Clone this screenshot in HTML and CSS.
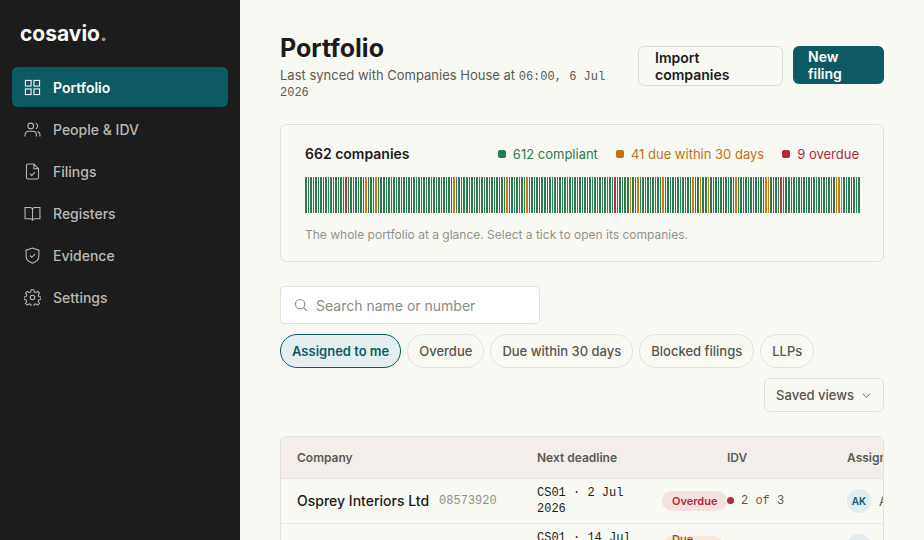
FILE: index.html
```html
<!doctype html>
<html lang="en">
<head>
  <meta charset="utf-8">
  <meta name="viewport" content="width=device-width, initial-scale=1">
  <title>Portfolio - Cosavio</title>
  <link rel="stylesheet" href="styles.css">
</head>
<body>
  <aside class="sidebar">
    <a class="logo" href="#">cosavio<span>.</span></a>
    <nav class="nav">
      <a class="active" href="#">
        <svg viewBox="0 0 24 24"><rect x="2" y="2" width="8" height="8"/><rect x="14" y="2" width="8" height="8"/><rect x="2" y="14" width="8" height="8"/><rect x="14" y="14" width="8" height="8"/></svg>
        Portfolio
      </a>
      <a href="#">
        <svg viewBox="0 0 24 24"><circle cx="9.5" cy="7" r="4"/><path d="M1.500 22v-2.500a5 5 0 0 1 5-5h6a5 5 0 0 1 5 5V22M16.500 3.200a4 4 0 0 1 0 7.600M22.500 22v-2.500a5 5 0 0 0-3.500-4.800"/></svg>
        People &amp; IDV
      </a>
      <a href="#">
        <svg viewBox="0 0 24 24"><path d="M14 1.500H5.500a2 2 0 0 0-2 2v17a2 2 0 0 0 2 2h13a2 2 0 0 0 2-2V8zM14 1.500V8h6.500M8.500 15l2.500 2.500 4.500-4.500"/></svg>
        Filings
      </a>
      <a href="#">
        <svg viewBox="0 0 24 24"><path d="M12 6.500a3 3 0 0 0-3-3H1.500v16H9a3 3 0 0 1 3 2.500 3 3 0 0 1 3-2.500h7.500v-16H15a3 3 0 0 0-3 3zM12 6.500V22"/></svg>
        Registers
      </a>
      <a href="#">
        <svg viewBox="0 0 24 24"><path d="M12 23c5-2 9-4.500 9-10V4.500L12 1.500 3 4.500V13c0 5.500 4 8 9 10zM8.500 12l2.500 2.500 4.500-4.500"/></svg>
        Evidence
      </a>
      <a href="#">
        <svg viewBox="0 0 24 24"><circle cx="12" cy="12" r="3.200"/><path d="M10.200 1h3.600l.7 3.200 2 .9 2.900-1.800 2.500 2.500-1.800 2.900.9 2 3 .7v3.200l-3 .7-.9 2 1.800 2.900-2.500 2.500-2.900-1.800-2 .9-.7 3.100h-3.600l-.7-3.100-2-.9-2.900 1.800-2.500-2.500 1.800-2.900-.9-2-3-.7v-3.200l3-.7.9-2-1.800-2.900 2.500-2.500 2.900 1.800 2-.9z"/></svg>
        Settings
      </a>
    </nav>
  </aside>

  <main class="main">
    <header class="page-header">
      <div class="page-title">
        <h1>Portfolio</h1>
        <p>Last synced with Companies House at <time class="mono">06:00, 6 Jul 2026</time></p>
      </div>
      <div class="actions">
        <button class="btn btn-import">Import companies</button>
        <button class="btn btn-primary">New filing</button>
      </div>
    </header>

    <section class="overview">
      <div class="overview-head">
        <h2>662 companies</h2>
        <ul class="legend">
          <li class="compliant">612 compliant</li>
          <li class="due">41 due within 30 days</li>
          <li class="overdue">9 overdue</li>
        </ul>
      </div>
      <div class="ticks" id="ticks"></div>
      <p class="caption">The whole portfolio at a glance. Select a tick to open its companies.</p>
    </section>

    <div class="toolbar">
      <label class="search">
        <svg viewBox="0 0 24 24"><circle cx="10.500" cy="10.500" r="8"/><path d="M16.500 16.500L22 22"/></svg>
        <input type="search" placeholder="Search name or number" aria-label="Search name or number">
      </label>
      <div class="chips">
        <button class="chip selected">Assigned to me</button>
        <button class="chip">Overdue</button>
        <button class="chip">Due within 30 days</button>
        <button class="chip">Blocked filings</button>
        <button class="chip">LLPs</button>
      </div>
      <button class="views">Saved views <svg viewBox="0 0 24 24"><path d="M4 8l8 8 8-8"/></svg></button>
    </div>

    <div class="table-wrap">
      <table>
        <colgroup>
          <col class="col-company">
          <col class="col-deadline">
          <col class="col-idv">
          <col class="col-assigned">
        </colgroup>
        <thead>
          <tr><th>Company</th><th>Next deadline</th><th>IDV</th><th>Assigned</th></tr>
        </thead>
        <tbody>
          <tr>
            <td><div class="company"><a href="#">Osprey Interiors Ltd</a><span class="number">08573920</span></div></td>
            <td><div class="deadline"><span class="mono">CS01 · 2 Jul 2026</span><span class="pill pill-overdue">Overdue</span></div></td>
            <td><div class="idv mono">2 of 3</div></td>
            <td><div class="assignee"><span class="avatar">AK</span>A. Khan</div></td>
          </tr>
          <tr>
            <td><div class="company"><a href="#">Marlow Foods Ltd</a><span class="number">10482736</span></div></td>
            <td><div class="deadline"><span class="mono">CS01 · 14 Jul 2026</span><span class="pill pill-due">Due soon</span></div></td>
            <td><div class="idv mono">3 of 3</div></td>
            <td><div class="assignee"><span class="avatar">AK</span>A. Khan</div></td>
          </tr>
        </tbody>
      </table>
    </div>
  </main>
  <script src="script.js"></script>
</body>
</html>
```

FILE: styles.css
```css
* {
  box-sizing: border-box;
}

body {
  margin: 0;
  display: flex;
  min-height: 100vh;
  background: #f9f9f3;
  color: #1b1b1b;
  font-family: Inter, "Liberation Sans", sans-serif;
  font-size: 14px;
}

h1, h2, p, ul {
  margin: 0;
  padding: 0;
}

a {
  color: inherit;
  text-decoration: none;
}

button, input {
  font: inherit;
  color: inherit;
}

button {
  cursor: pointer;
}

svg {
  flex: none;
  fill: none;
  stroke: currentColor;
  stroke-width: 2;
}

.mono, .number {
  font-family: "Liberation Mono", monospace;
}

/* Sidebar */
.sidebar {
  position: sticky;
  top: 0;
  flex: none;
  width: 240px;
  height: 100vh;
  padding: 20px 12px;
  background: #1c1c1c;
}

.logo {
  display: block;
  padding: 0 8px;
  margin-bottom: 19px;
  color: #fafaf5;
  font-size: 21px;
  font-weight: 700;
  line-height: 28px;
}

.logo span {
  color: #999;
}

.nav {
  display: flex;
  flex-direction: column;
  gap: 2px;
}

.nav a {
  display: flex;
  align-items: center;
  gap: 12px;
  height: 40px;
  padding: 0 12px;
  border-radius: 6px;
  color: #b9b9b6;
  font-weight: 500;
}

.nav svg {
  width: 17px;
  height: 17px;
  stroke-width: 1.500;
}

.nav .active {
  background: #0d5a62;
  color: #fff;
  font-weight: 600;
}

/* Page header */
.main {
  flex: 1;
  min-width: 0;
  padding: 32px 40px;
}

.page-header {
  display: flex;
  align-items: center;
  justify-content: space-between;
  gap: 24px;
  min-height: 68px;
  margin-bottom: 24px;
}

.page-title h1 {
  margin-bottom: 4px;
  font-size: 25px;
  font-weight: 700;
  line-height: 30px;
}

.page-title p {
  color: #5a5a56;
  font-size: 13px;
  line-height: 16px;
}

.page-title .mono {
  font-size: 12px;
  line-height: 12px;
}

.actions {
  display: flex;
  align-items: flex-start;
  flex: none;
  gap: 10px;
}

.btn {
  padding: 2px 16px;
  border: 1px solid #dcdcd6;
  border-radius: 6px;
  background: transparent;
  font-weight: 600;
  line-height: 17px;
  text-align: left;
}

.btn-import {
  width: 145px;
}

.btn-primary {
  width: 91px;
  padding: 2px 15px;
  border: 0;
  background: #0d5a62;
  color: #fff;
}

/* Portfolio overview */
.overview {
  padding: 19px 24px 18px;
  margin-bottom: 24px;
  border: 1px solid #e2e1da;
  border-radius: 6px;
}

.overview-head {
  display: flex;
  align-items: center;
  justify-content: space-between;
  margin-bottom: 13px;
  line-height: 20px;
}

.overview-head h2 {
  font-size: 14px;
  font-weight: 600;
}

.legend {
  display: flex;
  gap: 18px;
  list-style: none;
  font-size: 13px;
}

.legend li {
  display: flex;
  align-items: center;
  gap: 7px;
}

.legend li::before {
  content: "";
  width: 8px;
  height: 8px;
  border-radius: 2px;
  background: currentColor;
}

.compliant { color: #2b7a4f; }
.due { color: #c0720f; }
.overdue { color: #b02a37; }

.ticks {
  display: flex;
  gap: 1px;
  height: 36px;
  margin-bottom: 14px;
}

.tick {
  flex: 1;
  min-width: 0;
  padding: 0;
  border: 0;
  background: #2b7a4f;
}

.tick-due { background: #c97a16; }
.tick-overdue { background: #b8323c; }

.caption {
  color: #92928c;
  font-size: 12px;
  line-height: 16px;
}

/* Search and filters */
.toolbar {
  display: flex;
  flex-wrap: wrap;
  gap: 10px;
  margin-bottom: 24px;
}

.search {
  display: flex;
  align-items: center;
  gap: 8px;
  width: 260px;
  height: 38px;
  padding: 0 13px;
  border: 1px solid #e2e1da;
  border-radius: 5px;
  background: #fff;
  color: #8b8b87;
}

.search svg {
  width: 14px;
  height: 14px;
}

.search input {
  flex: 1;
  min-width: 0;
  padding: 0;
  border: 0;
  outline: 0;
  background: none;
}

.search input::placeholder {
  color: #8b8b87;
}

.chips {
  display: flex;
  flex-wrap: wrap;
  gap: 6px;
}

.chip, .views {
  height: 34px;
  padding: 0 11px;
  border: 1px solid #e2e1da;
  border-radius: 17px;
  background: transparent;
  color: #55554f;
  font-size: 13px;
  font-weight: 500;
}

.chip.selected {
  border-color: #0d5a62;
  background: #e6eff0;
  color: #0d5a62;
  font-weight: 600;
}

.views {
  display: flex;
  align-items: center;
  gap: 7px;
  margin-left: auto;
  border-radius: 5px;
}

.views svg {
  width: 11px;
  height: 11px;
}

/* Company table */
.table-wrap {
  overflow: hidden;
  border: 1px solid #e2e1da;
  border-radius: 6px;
}

table {
  width: 760px;
  table-layout: fixed;
  border-collapse: collapse;
}

.col-company { width: 240px; }
.col-deadline { width: 190px; }
.col-idv { width: 120px; }

th {
  height: 41px;
  padding: 0 16px;
  border-bottom: 1px solid #e2e1da;
  background: #f3eee9;
  color: #5a5a56;
  font-size: 12px;
  font-weight: 600;
  text-align: left;
}

td {
  height: 45px;
  padding: 0 16px;
  border-bottom: 1px solid #e8e8e1;
  white-space: nowrap;
}

.company {
  display: flex;
  align-items: center;
  gap: 10px;
}

.company a {
  font-weight: 500;
}

.number {
  color: #92928c;
  font-size: 12px;
}

.deadline {
  display: flex;
  align-items: center;
  gap: 20px;
}

.deadline .mono {
  flex: none;
  width: 105px;
  font-size: 12px;
  line-height: 16px;
  white-space: normal;
}

.pill {
  display: flex;
  align-items: center;
  flex: none;
  height: 20px;
  padding: 0 10px;
  border-radius: 10px;
  font-size: 11px;
  font-weight: 600;
  line-height: 14px;
}

.pill-overdue {
  background: #f5e1de;
  color: #b02a37;
}

.pill-due {
  width: 62px;
  background: #f7e8d8;
  color: #a8560c;
  white-space: normal;
}

.idv {
  display: flex;
  align-items: center;
  gap: 7px;
  color: #5a5a56;
  font-size: 12px;
}

.idv::before {
  content: "";
  width: 7px;
  height: 7px;
  border-radius: 50%;
  background: #b02a37;
}

.assignee {
  display: flex;
  align-items: center;
  gap: 8px;
  color: #5a5a56;
  font-size: 13px;
}

.avatar {
  width: 24px;
  height: 24px;
  border-radius: 50%;
  background: #e0ecf0;
  color: #0d5a62;
  font-size: 10px;
  font-weight: 600;
  line-height: 24px;
  text-align: center;
}
```

FILE: script.js
```js
// one tick stands for three companies
const TICKS = 221;
const due = [24, 28, 59, 80, 88, 129, 132, 142, 154, 157, 160, 171, 183, 184, 211, 212, 213];
const overdue = [16, 123, 189];

const strip = document.getElementById('ticks');
for (let i = 0; i < TICKS; i++) {
  const tick = document.createElement('button');
  tick.className = 'tick';
  tick.ariaLabel = 'Companies ' + (i * 3 + 1) + ' to ' + Math.min(i * 3 + 3, 662);
  if (due.includes(i)) tick.classList.add('tick-due');
  if (overdue.includes(i)) tick.classList.add('tick-overdue');
  strip.appendChild(tick);
}
```
